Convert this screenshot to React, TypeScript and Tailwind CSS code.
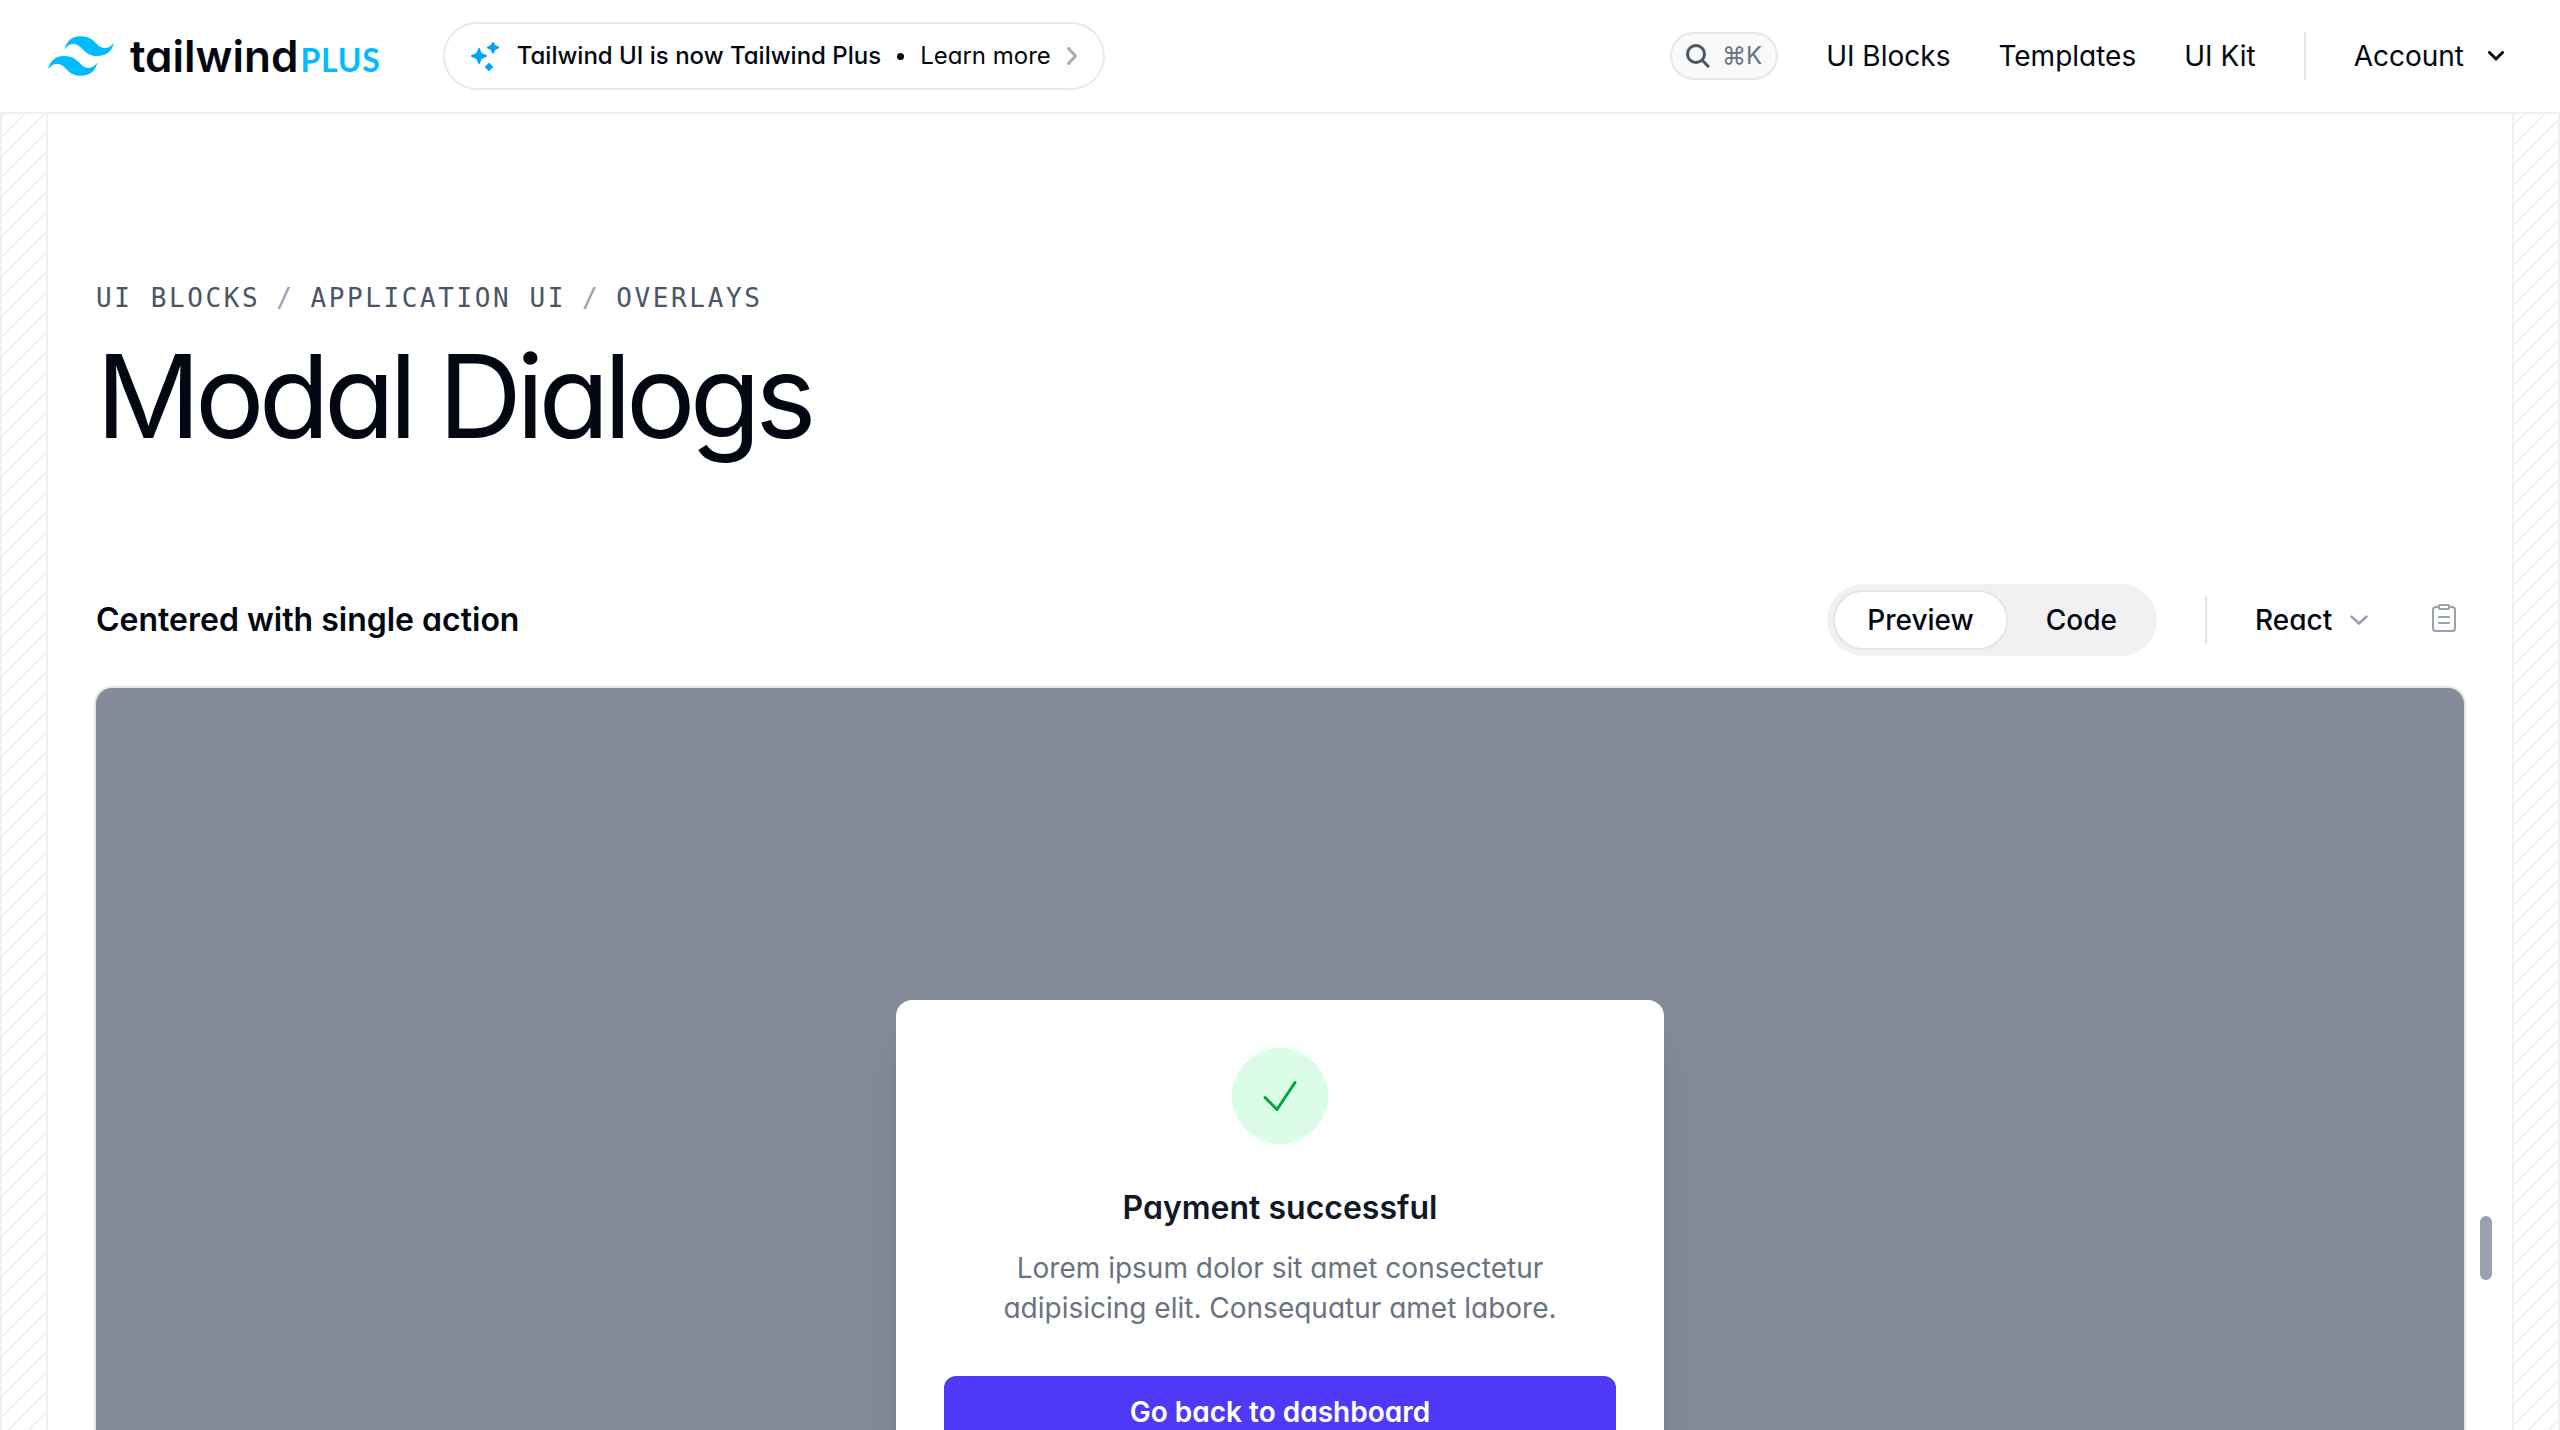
import { useState } from "react";

const inter = "font-['Inter',sans-serif] [font-feature-settings:'cv11']";
const hatch =
  "border-x-2 border-[#f0f0f0] bg-[repeating-linear-gradient(315deg,#ececec_0,#ececec_2px,transparent_0,transparent_50%)] bg-[size:20px_20px] bg-fixed";

function LogoMark() {
  return (
    <svg viewBox="0 4.8 24 14.4" className="w-[66px] h-10" fill="#00bcff" aria-hidden="true">
      <path d="M12.001 4.8c-3.2 0-5.2 1.6-6 4.8 1.2-1.6 2.6-2.2 4.2-1.8.913.228 1.565.89 2.288 1.624C13.666 10.618 15.027 12 18.001 12c3.2 0 5.2-1.6 6-4.8-1.2 1.6-2.6 2.2-4.2 1.8-.913-.228-1.565-.89-2.288-1.624C16.337 6.182 14.976 4.8 12.001 4.8zm-6 7.2c-3.2 0-5.2 1.6-6 4.8 1.2-1.6 2.6-2.2 4.2-1.8.913.228 1.565.89 2.288 1.624 1.177 1.194 2.538 2.576 5.512 2.576 3.2 0 5.2-1.6 6-4.8-1.2 1.6-2.6 2.2-4.2 1.8-.913-.228-1.565-.89-2.288-1.624C10.337 13.382 8.976 12 6.001 12z" />
    </svg>
  );
}

function Sparkles() {
  return (
    <svg viewBox="0 0 28 30" className="w-7 h-[30px]" fill="#00a6f4" stroke="#00a6f4" strokeWidth="2" strokeLinejoin="round" aria-hidden="true">
      <path d="M8 8 L10 13 L15 15 L10 17 L8 22 L6 17 L1 15 L6 13Z" />
      <path d="M22 2 L23.6 4.9 L27 6.5 L23.6 8.1 L22 11.5 L20.4 8.1 L17 6.5 L20.4 4.9Z" />
      <path d="M18 23 L19.4 24.6 L21 26 L19.4 27.4 L18 29 L16.6 27.4 L15 26 L16.6 24.6Z" />
    </svg>
  );
}

function Header() {
  return (
    <header className="flex h-[114px] shrink-0 items-center justify-between border-b-2 border-[#f0f0f0] pr-14 pl-12">
      <div className="flex items-center gap-[62px]">
        <a href="#home" aria-label="Tailwind Plus" className="flex items-center gap-4">
          <LogoMark />
          <span className="flex items-baseline gap-0.5">
            <span className="text-[44px] leading-[56px] font-semibold">tailwind</span>
            <span className="font-['Lato',sans-serif] text-[32px] leading-10 font-bold tracking-wide text-[#00bcff]">PLUS</span>
          </span>
        </a>
        <a href="#plus" className="flex h-[68px] items-center rounded-full border-2 border-[#e8e8e8] px-[26px] text-2xl">
          <Sparkles />
          <span className="ml-[18px] font-medium">Tailwind UI is now Tailwind Plus</span>
          <span className="mx-4 size-[7px] rounded-full bg-gray-950" />
          <span>Learn more</span>
          <svg viewBox="0 0 10 18" className="ml-4 h-[18px] w-[10px]" fill="none" stroke="#a9acb3" strokeWidth="3" strokeLinecap="round" strokeLinejoin="round" aria-hidden="true">
            <path d="M1.5 1.5 8.5 9l-7 7.5" />
          </svg>
        </a>
      </div>
      <nav className="flex items-center gap-12 text-[28px] leading-10">
        <button aria-label="Search" className="flex h-12 items-center gap-3 rounded-full border-2 border-[#e8e8e8] bg-[#f9f9f9] px-3.5 text-2xl text-gray-500">
          <svg viewBox="0 0 24 24" className="size-6" fill="none" stroke="#4a5565" strokeWidth="3" aria-hidden="true">
            <circle cx="10" cy="10" r="8.5" />
            <path d="m16 16 7 7" />
          </svg>
          <kbd className={`${inter}`}>⌘K</kbd>
        </button>
        <a href="#blocks">UI Blocks</a>
        <a href="#templates">Templates</a>
        <a href="#kit">UI Kit</a>
        <span className="h-12 w-0.5 bg-[#e5e5e5]" />
        <button className="flex items-center gap-6">
          Account
          <svg viewBox="0 0 16 10" className="h-[10px] w-4" fill="none" stroke="currentColor" strokeWidth="3" strokeLinecap="round" strokeLinejoin="round" aria-hidden="true">
            <path d="m1.5 1.5 6.5 6.5 6.5-6.5" />
          </svg>
        </button>
      </nav>
    </header>
  );
}

function Toolbar() {
  const [tab, setTab] = useState("Preview");
  return (
    <div className="flex items-center justify-between">
      <h2 className="text-[32px] leading-[56px] font-semibold">Centered with single action</h2>
      <div className="flex items-center gap-12 text-[28px] leading-10 font-medium">
        <div role="tablist" className="flex gap-1 rounded-full bg-[#f1f1f1] p-1.5">
          {["Preview", "Code"].map((name) => (
            <button
              key={name}
              role="tab"
              aria-selected={tab === name}
              onClick={() => setTab(name)}
              className={
                tab === name
                  ? "h-[60px] rounded-full border-2 border-[#e6e6e6] bg-white px-8"
                  : "h-[60px] rounded-full border-2 border-transparent px-8"
              }
            >
              {name}
            </button>
          ))}
        </div>
        <span className="h-12 w-0.5 bg-[#e5e5e5]" />
        <div className="flex items-center gap-14">
          <div className="grid items-center">
            <select aria-label="Framework" className="col-start-1 row-start-1 h-14 appearance-none bg-transparent pr-8">
              <option>React</option>
              <option>Vue</option>
              <option>HTML</option>
            </select>
            <svg viewBox="0 0 18 10" className="pointer-events-none col-start-1 row-start-1 h-[10px] w-[18px] justify-self-end" fill="none" stroke="#99a1af" strokeWidth="2.5" strokeLinecap="round" strokeLinejoin="round" aria-hidden="true">
              <path d="m1.5 1.5 7.5 7 7.5-7" />
            </svg>
          </div>
          <button aria-label="Copy code" className="px-2 pb-1">
            <svg viewBox="0 0 24 28" className="h-7 w-6" fill="none" stroke="#99a1af" strokeWidth="2" strokeLinecap="round" strokeLinejoin="round" aria-hidden="true">
              <path d="M7 3H4a3 3 0 0 0-3 3v18a3 3 0 0 0 3 3h16a3 3 0 0 0 3-3V6a3 3 0 0 0-3-3h-3" />
              <path d="M8 1h8a1 1 0 0 1 1 1v2a1 1 0 0 1-1 1H8a1 1 0 0 1-1-1V2a1 1 0 0 1 1-1Z" />
              <path d="M7 13h10M7 19h10" />
            </svg>
          </button>
        </div>
      </div>
    </div>
  );
}

function Dialog() {
  return (
    <div role="dialog" aria-labelledby="dialog-title" className="flex w-full max-w-3xl flex-col items-center rounded-2xl bg-white p-12 text-center shadow-[0_40px_50px_-10px_rgb(0_0_0/0.1),0_16px_20px_-12px_rgb(0_0_0/0.1)]">
      <div className="flex size-24 items-center justify-center rounded-full bg-green-100">
        <svg viewBox="0 0 24 24" className="size-12" fill="none" stroke="#00a63e" strokeWidth="1.5" strokeLinecap="round" strokeLinejoin="round" aria-hidden="true">
          <path d="m4.5 12.75 6 6 9-13.5" />
        </svg>
      </div>
      <h3 id="dialog-title" className="mt-10 text-[32px] leading-12 font-semibold text-gray-900">Payment successful</h3>
      <p className="mt-4 px-10 text-[28px] leading-10 text-gray-500">Lorem ipsum dolor sit amet consectetur adipisicing elit. Consequatur amet labore.</p>
      <button className="mt-12 w-full rounded-xl bg-[#4f39f6] py-4 text-[28px] leading-10 font-semibold text-white">Go back to dashboard</button>
    </div>
  );
}

export default function App() {
  return (
    <div className={`flex h-screen flex-col overflow-hidden bg-white text-gray-950 ${inter}`}>
      <Header />
      <div className="grid flex-1 grid-cols-[48px_1fr_48px]">
        <div className={hatch} />
        <main className="px-12 pt-40">
          <nav aria-label="Breadcrumb" className="flex gap-4 font-['DejaVu_Sans_Mono',monospace] text-[26px] leading-12 tracking-widest text-gray-600 uppercase">
            <a href="#blocks">UI Blocks</a>
            <span className="text-gray-400">/</span>
            <a href="#application">Application UI</a>
            <span className="text-gray-400">/</span>
            <a href="#overlays">Overlays</a>
          </nav>
          <h1 className="mt-3.5 text-[116px] leading-[120px] font-normal tracking-tighter">Modal Dialogs</h1>
          <div className="mt-32">
            <Toolbar />
          </div>
          <div className="grid grid-cols-[1fr_12px] items-center gap-x-4 pt-8 -mr-7">
            <div className="flex h-[1120px] items-center justify-center rounded-2xl bg-[#848a97] ring-2 ring-[#e5e5e5]">
              <Dialog />
            </div>
            <div role="separator" aria-label="Resize preview" className="h-16 rounded-full bg-[#99a1af]" />
          </div>
        </main>
        <div className={hatch} />
      </div>
    </div>
  );
}
